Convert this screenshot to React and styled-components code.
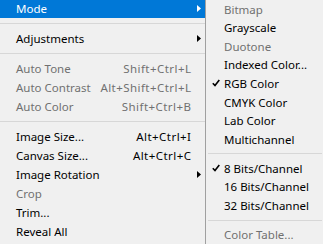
import React from 'react';
import styled, {createGlobalStyle} from 'styled-components';

const GlobalStyle = createGlobalStyle`
  html, body {
    margin: 0;
    padding: 0;
    background: #f0f0f0;
  }
  body {
    font-family: "Noto Sans", "Open Sans", sans-serif;
    font-size: 11.5px;
    overflow: hidden;
  }
`;

const mainItems = [
    {label: 'Mode', submenu: true, active: true},
    {sep: true},
    {label: 'Adjustments', submenu: true},
    {sep: true},
    {label: 'Auto Tone', shortcut: 'Shift+Ctrl+L', disabled: true},
    {label: 'Auto Contrast', shortcut: 'Alt+Shift+Ctrl+L', disabled: true},
    {label: 'Auto Color', shortcut: 'Shift+Ctrl+B', disabled: true},
    {sep: true},
    {label: 'Image Size...', shortcut: 'Alt+Ctrl+I'},
    {label: 'Canvas Size...', shortcut: 'Alt+Ctrl+C'},
    {label: 'Image Rotation', submenu: true},
    {label: 'Crop', disabled: true},
    {label: 'Trim...'},
    {label: 'Reveal All'},
];

const modeItems = [
    {label: 'Bitmap', disabled: true},
    {label: 'Grayscale'},
    {label: 'Duotone', disabled: true},
    {label: 'Indexed Color...'},
    {label: 'RGB Color', checked: true},
    {label: 'CMYK Color'},
    {label: 'Lab Color'},
    {label: 'Multichannel'},
    {sep: true},
    {label: '8 Bits/Channel', checked: true},
    {label: '16 Bits/Channel'},
    {label: '32 Bits/Channel'},
    {sep: true},
    {label: 'Color Table...', disabled: true},
];

const Arrow = ({light}) => (
    <svg width="4" height="7" viewBox="0 0 4 7">
        <path d="M0 0 L4 3.5 L0 7 Z" fill={light ? '#fff' : '#000'}/>
    </svg>
);

const Check = () => (
    <svg width="8" height="8" viewBox="0 0 8 8">
        <path d="M0.8 4.2 L3 6.6 L7.3 1" fill="none" stroke="#000" strokeWidth="1.6"/>
    </svg>
);

const App = () => {
    return (
        <Wrap>
            <GlobalStyle/>
            <MainMenu>
                {mainItems.map((item, index) =>
                    item.sep ? <Separator key={index}/> :
                        <Row key={index} $active={item.active} $disabled={item.disabled}>
                            <Label>{item.label}</Label>
                            {item.shortcut && <Shortcut>{item.shortcut}</Shortcut>}
                            <ArrowCell>{item.submenu && <Arrow light={item.active}/>}</ArrowCell>
                        </Row>
                )}
            </MainMenu>
            <SubMenu>
                {modeItems.map((item, index) =>
                    item.sep ? <SubSeparator key={index}/> :
                        <SubRow key={index} $disabled={item.disabled}>
                            <CheckCell>{item.checked && <Check/>}</CheckCell>
                            <Label>{item.label}</Label>
                        </SubRow>
                )}
            </SubMenu>
        </Wrap>
    )
}

const Wrap = styled.div`
  display: flex;
  width: 323px;
  height: 244px;
  overflow: hidden;
  background: #f0f0f0;
`;

const MainMenu = styled.div`
  width: 205px;
  margin-top: -1px;
  display: flex;
  flex-direction: column;
`;

const Row = styled.div`
  display: flex;
  align-items: center;
  height: 19px;
  padding-left: 16px;
  color: ${p => p.$active ? '#fff' : p.$disabled ? '#707070' : '#000'};
  background: ${p => p.$active ? '#0078d7' : 'transparent'};
  white-space: nowrap;
`;

const Label = styled.span`
  flex: 1;
`;

const Shortcut = styled.span`
  letter-spacing: 0.45px;
  margin-right: -0.45px;
`;

const ArrowCell = styled.span`
  width: 14px;
  height: 19px;
  display: flex;
  align-items: center;
  padding-left: 6px;
  box-sizing: border-box;
`;

const Separator = styled.div`
  height: 11px;
  display: flex;
  align-items: center;

  &::after {
    content: "";
    display: block;
    width: 100%;
    height: 1px;
    background: #d7d7d7;
  }
`;

const SubMenu = styled.div`
  flex: 1;
  border-left: 1px solid #a0a0a0;
  display: flex;
  flex-direction: column;
`;

const SubRow = styled.div`
  display: flex;
  align-items: center;
  height: 19px;
  color: ${p => p.$disabled ? '#707070' : '#000'};
  white-space: nowrap;
`;

const CheckCell = styled.span`
  width: 18px;
  display: flex;
  align-items: center;
  padding-left: 6px;
  box-sizing: border-box;
`;

const SubSeparator = styled(Separator)`
  padding: 0 1px 0 2px;
`;

export default App;
